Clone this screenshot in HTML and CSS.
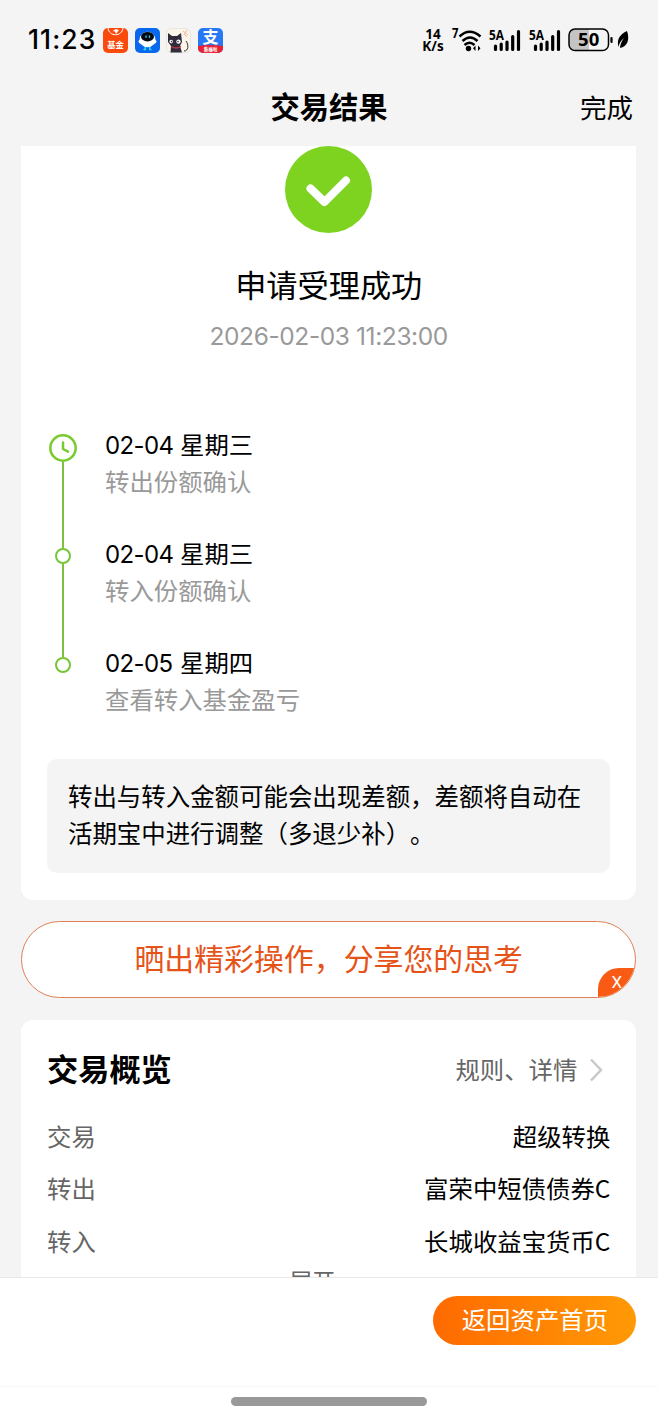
FILE: index.html
```html
<!DOCTYPE html>
<html lang="zh-CN">
    <head>
        <meta charset="utf-8">
        <title>交易结果</title>
        <link rel="stylesheet" href="styles.css">
    </head>

    <body>
        <div class="screen">
            <div class="status-bar">
                <span class="clock">11:23</span>
                <div class="apps">
                    <svg class="app" viewBox="0 0 25 25">
                        <rect width="25" height="25" rx="5" fill="#fa4b0c"/>
                        <path d="M5 0C6 9 19 9 20 0" fill="none" stroke="#fff" stroke-width="1"/>
                        <path d="M9.500 3l3.500-2 3 1-3 4-1-2.500z" fill="#fff"/>
                        <text x="12.500" y="19.500" font-size="8.300" font-weight="700" fill="#fff" text-anchor="middle">基金</text>
                    </svg>
                    <svg class="app" viewBox="0 0 25 25">
                        <rect width="25" height="25" rx="5" fill="#0869ee"/>
                        <path d="M10.300 18v3.500H8.500M14.700 18v3.500h1.800" fill="none" stroke="#35d6ee" stroke-width="1.500"/>
                        <ellipse cx="12.500" cy="13.500" rx="9" ry="4" fill="#fff"/>
                        <circle cx="12.500" cy="11.500" r="7.800" fill="#fff"/>
                        <ellipse cx="12.500" cy="8.700" rx="6.500" ry="4.800" fill="#050a14"/>
                        <path d="M11 7.500v2.200M14.500 7.500v2.200" stroke="#35d6ee" stroke-width="1.300"/>
                    </svg>
                    <svg class="app" viewBox="0 0 25 25">
                        <rect x=".5" y=".5" width="24" height="24" rx="5" fill="#faf7ea" stroke="#dedbd2" stroke-width=".6"/>
                        <path d="M17 3l5 4M21 2l-3 5M18 6l3 3" stroke="#f3b79e" stroke-width="1"/>
                        <path d="M18 23c4.500 0 5-6 2-10" fill="none" stroke="#302b3d" stroke-width="1"/>
                        <path d="M2 5l4 3h5l4-3 1 9-2 4 2 6.500H4.500L5 18l-3-4z" fill="#302b3d"/>
                        <circle cx="5.200" cy="13.600" r="1.800" fill="#fff"/>
                        <circle cx="12.500" cy="13.600" r="2.200" fill="#fff"/>
                        <circle cx="5.600" cy="13.600" r=".8" fill="#302b3d"/>
                        <circle cx="12" cy="13.600" r=".8" fill="#302b3d"/>
                        <path d="M5 18.500q5 3 10 0" fill="none" stroke="#b9393f" stroke-width="1.300"/>
                    </svg>
                    <svg class="app" viewBox="0 0 25 25">
                        <rect width="25" height="25" rx="5" fill="#2878f4"/>
                        <path d="M0 18q12.500-2 25 0v2a5 5 0 0 1-5 5H5a5 5 0 0 1-5-5z" fill="#e82132"/>
                        <text x="12.500" y="15.300" font-size="16" font-weight="700" fill="#fff" text-anchor="middle">支</text>
                        <text x="12.500" y="23.300" font-size="4.500" font-weight="700" fill="#fff" text-anchor="middle">集福啦</text>
                    </svg>
                </div>
                <div class="signals">
                    <div class="speed"><span>14</span><span>K/s</span></div>
                    <svg class="wifi" viewBox="0 0 32 26">
                        <text x="0" y="11" font-size="14" font-weight="700" textLength="6.500" lengthAdjust="spacingAndGlyphs">7</text>
                        <path d="M7.500 9.500q10-9.500 21 0M10.500 14q7.500-7 15 0" fill="none" stroke="#000" stroke-width="2.500"/>
                        <path d="M12.500 18q5-4.500 10 0" fill="none" stroke="#000" stroke-width="2.500"/>
                        <circle cx="16.500" cy="21.500" r="2.700"/>
                        <path d="M23.500 18.500v5.500l-2.500-2.800zM26 18.500v5.500l2.500-2.800z"/>
                    </svg>
                    <svg class="bars" viewBox="0 0 32 26">
                        <text x="0" y="12.500" font-size="14" font-weight="700" textLength="15" lengthAdjust="spacingAndGlyphs">5A</text>
                        <path d="M6.500 19v3.500M12.200 17v5.500M18 15v7.500M23.700 9.500v13M29.500 4.500v18" stroke="#000" stroke-width="3.200" stroke-linecap="round"/>
                    </svg>
                    <svg class="bars" viewBox="0 0 32 26">
                        <text x="0" y="12.500" font-size="14" font-weight="700" textLength="15" lengthAdjust="spacingAndGlyphs">5A</text>
                        <path d="M6.500 19v3.500M12.200 17v5.500M18 15v7.500M23.700 9.500v13M29.500 4.500v18" stroke="#000" stroke-width="3.200" stroke-linecap="round"/>
                    </svg>
                    <svg class="battery" viewBox="0 0 62 26">
                        <path d="M21 2H7a6 6 0 0 0-6 6v9a6 6 0 0 0 6 6h14z" fill="#c4c4c4"/>
                        <rect x="1" y="2" width="39.500" height="21.500" rx="6" fill="none" stroke="#000" stroke-width="1.500"/>
                        <path d="M43.500 11v4" stroke="#000" stroke-width="2.200" stroke-linecap="round"/>
                        <text x="20.700" y="19.300" font-size="18.500" font-weight="700" text-anchor="middle">50</text>
                        <path d="M59 4C52 7.500 48.500 12 50.500 20c.5-4 3-7 5.500-9-2 3-4 6-4 10 7.500-1 10-9 7-17z"/>
                    </svg>
                </div>
            </div>

            <div class="nav">
                <h1 class="nav-title">交易结果</h1>
                <span class="nav-done">完成</span>
            </div>

            <div class="content">
                <div class="card result">
                    <svg class="success" viewBox="0 0 87 87">
                        <circle cx="43.500" cy="43.500" r="43.500" fill="#7ed321"/>
                        <path d="M25.500 42.500L39.500 56L61 34.500" fill="none" stroke="#fff" stroke-width="8" stroke-linecap="round" stroke-linejoin="round"/>
                    </svg>
                    <h2 class="result-title">申请受理成功</h2>
                    <div class="result-time">2026-02-03 11:23:00</div>

                    <ul class="steps">
                        <li class="step">
                            <div class="rail">
                                <svg class="step-clock" viewBox="0 0 28 28">
                                    <circle cx="14" cy="14" r="12.700" fill="#fff" stroke="#77cb2d" stroke-width="2.500"/>
                                    <path d="M14 8.500v6.500l5 2.700" fill="none" stroke="#77cb2d" stroke-width="2.500" stroke-linecap="round" stroke-linejoin="round"/>
                                </svg>
                            </div>
                            <div>
                                <div class="step-date"><span class="num">02-04</span>星期三</div>
                                <div class="step-text">转出份额确认</div>
                            </div>
                        </li>
                        <li class="step">
                            <div class="rail"><span class="dot"></span></div>
                            <div>
                                <div class="step-date"><span class="num">02-04</span>星期三</div>
                                <div class="step-text">转入份额确认</div>
                            </div>
                        </li>
                        <li class="step">
                            <div class="rail"><span class="dot"></span></div>
                            <div>
                                <div class="step-date"><span class="num">02-05</span>星期四</div>
                                <div class="step-text">查看转入基金盈亏</div>
                            </div>
                        </li>
                    </ul>

                    <p class="note">转出与转入金额可能会出现差额，差额将自动在<br>活期宝中进行调整（多退少补）。</p>
                </div>

                <div class="share">
                    <span>晒出精彩操作，分享您的思考</span>
                    <span class="share-close">X</span>
                </div>

                <div class="card overview">
                    <div class="overview-head">
                        <h2 class="overview-title">交易概览</h2>
                        <span class="overview-link">规则、详情</span>
                        <svg class="chevron" viewBox="0 0 14 24">
                            <path d="M2 1.500L12 12L2 22.500" fill="none" stroke="#c8c8c8" stroke-width="2.500"/>
                        </svg>
                    </div>
                    <div class="row"><span class="label">交易</span><span>超级转换</span></div>
                    <div class="row"><span class="label">转出</span><span>富荣中短债债券C</span></div>
                    <div class="row"><span class="label">转入</span><span>长城收益宝货币C</span></div>
                    <div class="expand">展开</div>
                </div>
            </div>

            <div class="footer">
                <button class="home-button" type="button">返回资产首页</button>
                <div class="gesture"><span class="gesture-bar"></span></div>
            </div>
        </div>
    </body>
</html>
```
FILE: styles.css
```css
* {
    box-sizing: border-box;
}

body {
    margin: 0;
    font-family: "Noto Sans CJK SC", sans-serif;
    text-spacing-trim: space-all;
    color: #000;
    background-color: #f4f4f4;
}

h1, h2, p, ul {
    margin: 0;
    padding: 0;
}

.screen {
    display: flex;
    flex-direction: column;
    width: 658px;
    height: 1416px;
    overflow: hidden;
}

/* status bar */
.status-bar {
    display: flex;
    align-items: center;
    height: 80px;
    padding: 0 28px;
    flex: none;
}

.clock {
    width: 75px;
    font-family: Inter, sans-serif;
    font-size: 26.5px;
    font-weight: 500;
    line-height: 30px;
    letter-spacing: 1.1px;
    padding-bottom: 2px;
    white-space: nowrap;
}

.apps {
    display: flex;
    gap: 6.5px;
}

.app {
    width: 25px;
    height: 25px;
}

.signals {
    display: flex;
    align-items: center;
    margin-left: auto;
    font-family: "Open Sans", sans-serif;
}

.speed {
    display: flex;
    flex-direction: column;
    align-items: center;
    width: 24px;
    margin-right: 7px;
    font-size: 13.5px;
    font-weight: 700;
    line-height: 12.5px;
}

.wifi {
    width: 32px;
    height: 26px;
    margin-right: 5px;
}

.bars {
    width: 32px;
    height: 26px;
    margin-right: 7.5px;
}

.battery {
    width: 62px;
    height: 26px;
}

/* navigation */
.nav {
    display: grid;
    grid-template-columns: 1fr auto 1fr;
    align-items: center;
    height: 66px;
    padding: 0 25px 13px;
    flex: none;
}

.nav-title {
    grid-column: 2;
    padding-bottom: 4px;
    font-size: 29.3px;
    line-height: 40px;
}

.nav-done {
    justify-self: end;
    font-size: 26.5px;
    line-height: 40px;
}

.content {
    flex: 1;
    min-height: 0;
    overflow: hidden;
    padding: 0 21.6px 0 21px;
}

.card {
    background-color: #fff;
    border-radius: 12px;
}

/* result card */
.result {
    height: 754px;
    border-radius: 0 0 12px 12px;
    padding: 0 26px;
    text-align: center;
}

.success {
    display: block;
    width: 87px;
    height: 87px;
    margin: 0 auto;
}

.result-title {
    margin-top: 31px;
    font-size: 31.2px;
    font-weight: 400;
    line-height: 40px;
}

.result-time {
    margin-top: 17px;
    font-family: Inter, sans-serif;
    font-size: 24.5px;
    line-height: 30px;
    letter-spacing: -0.4px;
    color: #999;
}

.steps {
    list-style-type: none;
    margin-top: 75px;
    text-align: left;
}

.step {
    display: flex;
    height: 109px;
}

.rail {
    display: flex;
    flex-direction: column;
    align-items: center;
    width: 32px;
    margin-right: 26px;
    padding-top: 13px;
}

.step:first-child .rail {
    padding-top: 8px;
}

/* line running down to the next dot */
.step:not(:last-child) .rail::after {
    content: "";
    width: 2px;
    flex: 1;
    margin-bottom: -13px;
    background-color: #7bc13f;
}

.step-clock {
    width: 28px;
    height: 28px;
    flex: none;
}

.dot {
    width: 16px;
    height: 16px;
    flex: none;
    border: 2px solid #77c637;
    border-radius: 50%;
}

.step-date {
    font-size: 24.4px;
    line-height: 36px;
}

.num {
    display: inline-block;
    width: 75px;
    font-family: Inter, sans-serif;
    font-size: 24px;
    letter-spacing: -0.6px;
}

.step-text {
    margin-top: -1px;
    font-size: 24.4px;
    line-height: 36px;
    color: #999;
}

.note {
    height: 114px;
    margin-top: 6px;
    padding: 19px 21px;
    border-radius: 10px;
    background-color: #f4f4f4;
    font-size: 24.45px;
    line-height: 36.7px;
    text-align: left;
    white-space: nowrap;
}

/* share banner */
.share {
    position: relative;
    display: flex;
    align-items: center;
    justify-content: center;
    height: 77px;
    margin-top: 21px;
    padding-bottom: 5px;
    border: 1px solid #df8056;
    border-radius: 39px;
    overflow: hidden;
    background-color: #fff;
    color: #e65318;
    font-size: 29.9px;
}

.share-close {
    position: absolute;
    right: 0;
    bottom: 0;
    width: 37px;
    height: 29px;
    border-top-left-radius: 21px;
    background-color: #fa5b14;
    color: #fff;
    font-family: Roboto, sans-serif;
    font-size: 17px;
    line-height: 29px;
    text-align: center;
}

/* overview card */
.overview {
    height: 400px;
    margin-top: 22px;
    padding: 24px 26px 0;
}

.overview-head {
    display: flex;
    align-items: center;
    height: 48px;
    margin-bottom: 17px;
}

.overview-title {
    font-size: 31.2px;
    line-height: 48px;
}

.overview-link {
    margin-left: auto;
    font-size: 24.4px;
    color: #666;
}

.chevron {
    width: 14px;
    height: 24px;
    margin: 4px 7px 0 12px;
}

.row {
    display: flex;
    align-items: center;
    justify-content: space-between;
    height: 52.5px;
    font-size: 24.4px;
}

.label {
    color: #666;
}

.expand {
    margin-top: -3px;
    padding-right: 33px;
    font-size: 23px;
    line-height: 32px;
    color: #666;
    text-align: center;
}

/* footer */
.footer {
    display: flex;
    flex-direction: column;
    flex: none;
    height: 139px;
    padding-top: 18px;
    border-top: 1px solid #e8e8e8;
    background-color: #fff;
}

.home-button {
    align-self: flex-end;
    width: 203px;
    height: 49px;
    margin-right: 21.6px;
    padding: 0 0 4px;
    border: none;
    border-radius: 25px;
    background: linear-gradient(to right, #ff6a00, #ff9a05);
    color: #fff;
    font-family: inherit;
    font-size: 24.4px;
}

.gesture {
    height: 30px;
    margin-top: auto;
    padding-top: 10px;
    border-top: 1px solid #f7f7f7;
}

.gesture-bar {
    display: block;
    width: 196px;
    height: 9px;
    margin: 0 auto;
    border-radius: 5px;
    background-color: #999;
}
```
